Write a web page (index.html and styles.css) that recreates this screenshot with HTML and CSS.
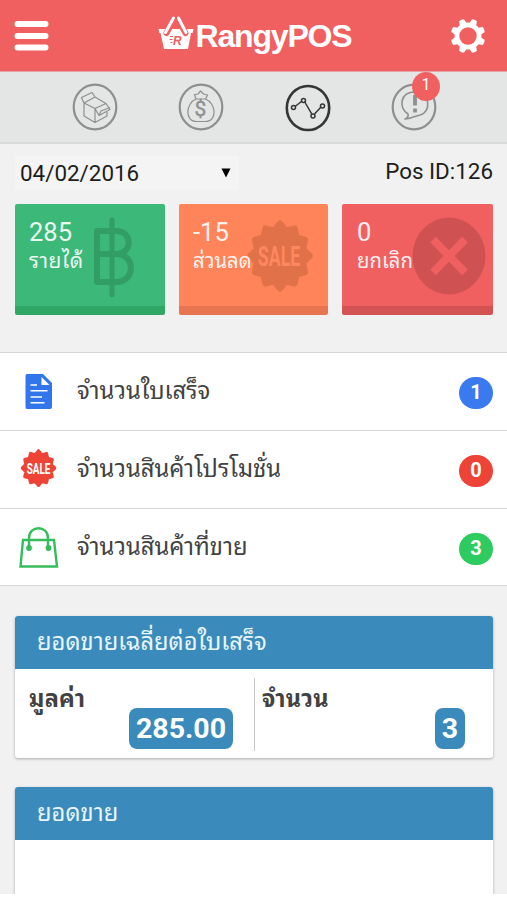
FILE: index.html
```html
<!DOCTYPE html>
<html lang="th">
<head>
<meta charset="utf-8">
<title>RangyPOS</title>
<link rel="stylesheet" href="styles.css">
</head>
<body>
<svg class="defs" width="0" height="0" aria-hidden="true">
  <symbol id="burst" viewBox="0 0 100 100">
    <path fill="currentColor" stroke="currentColor" stroke-width="9" stroke-linejoin="round" d="M95 50 84.800 59.300 88 72 75.500 75.500 72 88 59.300 84.800 50 95 40.700 84.800 28 88 24.500 75.500 12 72 15.200 59.300 5 50 15.200 40.700 12 28 24.500 24.500 28 12 40.700 15.200 50 5 59.300 15.200 72 12 75.500 24.500 88 28 84.800 40.700Z"/>
  </symbol>
</svg>
<div class="app">
  <header class="header">
    <svg class="menu" width="34" height="30" viewBox="0 0 34 30"><path d="M3.500 3H31.500M3.500 15H31.500M3.500 26.500H31.500" stroke="#fff" stroke-width="6" stroke-linecap="round"/></svg>
    <div class="logo">
      <svg width="38" height="36" viewBox="0 0 38 36">
        <path fill="#fff" d="M1.500 14H36.500L35.500 18H34L31 34H7L3.500 18H2.500Z"/>
        <path d="M9.500 18 16 6M28.500 18 22 6" stroke="#f16061" stroke-width="6" stroke-linecap="round"/>
        <path d="M8.500 17.500 16.500 3M29 17.500 21.500 3" stroke="#fff" stroke-width="3" stroke-linecap="round"/>
        <text class="logo-letter" x="16" y="30">R</text>
        <path d="M13 21.500h3M12.500 24.500h3M13.500 27.500h2" stroke="#f16061"/>
      </svg>
      <span class="logo-name">RangyPOS</span>
    </div>
    <svg class="gear" width="36" height="36" viewBox="-18 -18 36 36">
      <g fill="#fff">
        <path id="tooth" transform="rotate(22.5)" d="M-4 -11 -2.600 -17Q0 -18 2.600 -17L4 -11V11L2.600 17Q0 18-2.600 17L-4 11Z"/>
        <use href="#tooth" transform="rotate(45)"/><use href="#tooth" transform="rotate(90)"/><use href="#tooth" transform="rotate(135)"/>
        <circle r="13.500"/>
      </g>
      <circle r="8.700" fill="#f16061"/>
    </svg>
  </header>

  <nav class="tabs">
    <svg width="46" height="48" viewBox="0 0 46 48" fill="none" stroke="#8d9090" stroke-linejoin="round">
      <ellipse cx="23" cy="24" rx="21.300" ry="22.300" stroke-width="2.200"/>
      <path stroke-width="1.200" d="M12 20 23 25.500 34 20.500 23 14ZM12 20 9.500 14.500 20 9.500 23 14M12 20V33L23 39.500 35 33V29M23 25.500V39.500M34 20.500 38 26.500 27 32.500 23 25.500M27 32.500 29 28 38 24.500"/>
    </svg>
    <svg width="46" height="48" viewBox="0 0 46 48" fill="none" stroke="#8d9090" stroke-linejoin="round">
      <ellipse cx="23" cy="24" rx="21.300" ry="22.300" stroke-width="2.200"/>
      <path stroke-width="1.200" d="M18 16 16.500 11.500 20 11 22.500 8 25.500 11 29.500 12 27.500 16ZM18 16C8 20 6 38.500 19 38.500H27C40 38.500 38 20 27.500 16"/>
      <text class="dollar" x="22.500" y="33">$</text>
    </svg>
    <svg width="46" height="48" viewBox="0 0 46 48" fill="none" stroke="#333537">
      <ellipse cx="23" cy="25" rx="21.200" ry="22" stroke-width="2.600"/>
      <path stroke-width="1.500" d="M10 23.500 16.500 18.500M19.500 18.500 26.800 31.200M29.500 31 36 24"/>
      <circle cx="8.500" cy="24.500" r="2" stroke-width="1.500"/><circle cx="18.500" cy="17.500" r="2" stroke-width="1.500"/><circle cx="28" cy="33" r="2" stroke-width="1.500"/><circle cx="37.500" cy="23" r="2" stroke-width="1.500"/>
    </svg>
    <div class="alert">
      <svg width="46" height="48" viewBox="0 0 46 48" fill="none" stroke="#8d9090" stroke-linejoin="round">
        <ellipse cx="23" cy="24" rx="21.300" ry="22.300" stroke-width="2.200"/>
        <path stroke-width="1.600" d="M17 31C7 25 9 9 24 9S41 29 29 32C24 33 19 36 14 36Q18 34 17 31Z"/>
        <path stroke-width="3.800" d="M24 12V22.500M24 25.500V29.500"/>
      </svg>
      <span class="alert-count">1</span>
    </div>
  </nav>

  <div class="filter">
    <div class="date"><span>04/02/2016</span><svg width="10" height="10" viewBox="0 0 10 10"><path d="M.5.5H9.500L5 9.500Z"/></svg></div>
    <span class="pos">Pos ID:126</span>
  </div>

  <section class="cards">
    <div class="card green">
      <svg class="card-art" width="46" height="82" viewBox="0 0 46 82" fill="none" stroke="#329e66" stroke-linejoin="round">
        <path stroke-width="6" d="M5 38H24C44 38 44 66 24 66H5V15H24C41 15 41 38 24 38"/>
        <path stroke-width="5" stroke-linecap="round" d="M20 4V79"/>
      </svg>
      <div class="card-value">285</div><div class="card-label">รายได้</div>
    </div>
    <div class="card orange">
      <svg class="card-art" width="66" height="72" viewBox="0 0 66 72">
        <g color="#e07148" transform="scale(1 1.09)"><use href="#burst" width="66" height="66"/></g>
        <text class="sale" transform="translate(32 45.500) scale(.66 1)" font-size="27" fill="#fd875f">SALE</text>
      </svg>
      <div class="card-value">-15</div><div class="card-label snug">ส่วนลด</div>
    </div>
    <div class="card red">
      <svg class="card-art" width="74" height="78" viewBox="0 0 74 78">
        <ellipse cx="37" cy="39" rx="36.500" ry="38.500" fill="#cf5152"/>
        <path d="M21 22.500 53 55.500M53 22.500 21 55.500" stroke="#f16061" stroke-width="8"/>
      </svg>
      <div class="card-value">0</div><div class="card-label snug">ยกเลิก</div>
    </div>
  </section>

  <section class="list">
    <div class="item">
      <svg class="item-icon" width="40" height="42" viewBox="0 0 40 42">
        <path fill="#3276ee" d="M8 3H24L33 12V36Q33 38 31 38H8Q6.500 38 6.500 36V5Q6.500 3 8 3Z"/>
        <path fill="#fff" d="M22.500 6V14H30.500Z"/>
        <path d="M11.500 14H18M11.500 19.800H28.500M11.500 26H23M11.500 31.800H25.500" stroke="#fff" stroke-width="1.500"/>
      </svg>
      <span class="item-label">จำนวนใบเสร็จ</span><span class="pill blue">1</span>
    </div>
    <div class="item">
      <svg class="item-icon" width="40" height="42" viewBox="0 0 40 42">
        <g color="#ee4437" transform="scale(1 1.06)"><use href="#burst" x="1.500" y="0" width="36" height="36"/></g>
        <text class="sale" transform="translate(19.500 25) scale(.64 1)" font-size="15.500" fill="#fff">SALE</text>
      </svg>
      <span class="item-label">จำนวนสินค้าโปรโมชั่น</span><span class="pill crimson">0</span>
    </div>
    <div class="item">
      <svg class="item-icon" width="40" height="42" viewBox="0 0 40 42" fill="none" stroke="#35bd5b" stroke-width="2.400">
        <path d="M4 14H35L38 40.500H1.500ZM10 22V12C10 -1 29 -1 29 12V22"/>
        <circle cx="10" cy="22" r="1.700" fill="#35bd5b"/><circle cx="29.500" cy="22" r="1.700" fill="#35bd5b"/>
      </svg>
      <span class="item-label">จำนวนสินค้าที่ขาย</span><span class="pill lime">3</span>
    </div>
  </section>

  <section class="panel">
    <h2 class="panel-title">ยอดขายเฉลี่ยต่อใบเสร็จ</h2>
    <div class="stats">
      <div class="stat"><span class="stat-label">มูลค่า</span><span class="stat-value">285.00</span></div>
      <div class="stat"><span class="stat-label">จำนวน</span><span class="stat-value">3</span></div>
    </div>
  </section>
  <section class="panel sales">
    <h2 class="panel-title">ยอดขาย</h2>
  </section>
</div>
</body>
</html>
```
FILE: styles.css
```css
* { box-sizing: border-box; }
html, body { margin: 0; height: 900px; overflow: hidden; background: #fff; }
body { font-family: Roboto, "Noto Sans Thai Looped", Loma, "Noto Sans Thai", "Noto Sans", sans-serif; color: #424242; }
svg { display: block; flex: none; overflow: visible; }
.defs { position: absolute; }
.app { height: 894px; overflow: hidden; background: #f1f1f1; }

.header { height: 72px; background: #f16061; border-bottom: 1px solid #e6a3a3; display: flex; align-items: center; justify-content: space-between; padding: 0 21px 0 14px; }
.logo { display: flex; align-items: center; gap: 1px; margin-left: 10px; }
.logo svg { margin-top: -5px; }
.logo-name { font: bold 32px/40px "Liberation Sans", Arial, sans-serif; letter-spacing: -1.2px; color: #fff; }
.logo-letter { font: italic bold 12px "Liberation Sans", sans-serif; fill: #f16061; }

.tabs { height: 72px; background: #e4e5e5; border-bottom: 2px solid #d9dada; display: flex; justify-content: space-between; padding: 11px 70px 0 72px; }
.dollar { font: 21px Roboto, sans-serif; fill: #8d9090; stroke: #8d9090; stroke-width: .4; text-anchor: middle; }
.alert { position: relative; }
.alert-count { position: absolute; left: 21px; top: -11px; width: 28px; height: 29px; border-radius: 50%; background: #f16061; color: #fff; font-size: 16px; line-height: 25px; text-align: center; }

.filter { height: 60px; display: flex; align-items: flex-start; justify-content: space-between; padding: 12px 14px 0 15px; color: #1d1d1d; font-size: 22.4px; line-height: 32px; }
.date { width: 224px; height: 34px; padding: 0 8px 0 5px; background: #f4f4f4; display: flex; align-items: center; justify-content: space-between; }
.pos { line-height: 31px; }

.cards { height: 148px; padding: 0 14px 0 15px; display: grid; grid-template-columns: 150px 149px 151px; justify-content: space-between; align-items: start; }
.card { position: relative; height: 111px; padding: 13px 0 0 14px; border-radius: 2px; border-bottom: 9px solid; color: #fff; }
.card-value { position: relative; font-size: 25.5px; line-height: 30px; opacity: .9; }
.card-label { position: relative; font-size: 21px; line-height: 29px; letter-spacing: .4px; white-space: nowrap; opacity: .9; }
.card-label.snug { font-size: 20.3px; letter-spacing: 0; }
.card-art { position: absolute; }
.green { background: #3cb878; border-color: #30a865; }
.green .card-art { left: 77px; top: 12px; }
.orange { background: #ff8459; border-color: #e77650; }
.orange .card-art { left: 68px; top: 16px; }
.red { background: #f16061; border-color: #d35354; padding-left: 15px; }
.red .card-art { left: 70px; top: 13px; }
.sale { font-family: Roboto, sans-serif; font-weight: bold; text-anchor: middle; }

.list { height: 234px; background: #fff; border-top: 1px solid #d6d6d6; }
.item { height: 78px; border-bottom: 1px solid #d6d6d6; display: flex; align-items: center; padding: 0 14px 0 19px; }
.item:last-child { height: 77px; }
.item-label { flex: 1; margin-left: 18px; margin-top: -1px; font-size: 23.8px; line-height: 34px; }
.pill { width: 34px; height: 32px; margin-top: 3px; border-radius: 16px; color: #fff; font-size: 20px; line-height: 31px; font-weight: bold; text-align: center; }
.blue { background: #397bef; }
.crimson { background: #ee4437; }
.lime { background: #2dcb60; }

.panel { height: 142px; margin: 30px 14px 0 15px; background: #fff; border-radius: 3px; box-shadow: 0 1px 3px rgba(0,0,0,.3); overflow: hidden; }
.panel-title { margin: 0; height: 53px; padding-left: 22px; background: #3a8bbc; color: #e9f6ff; font-size: 23.7px; line-height: 52px; font-weight: normal; }
.stats { display: grid; grid-template-columns: 240px 1fr; padding-top: 9px; }
.stat { height: 73px; display: flex; flex-direction: column; padding: 5px 21px 0 14px; border-right: 1px solid #c8c8c8; }
.stat + .stat { border: 0; padding: 5px 28px 0 7px; }
.stat-label { font-size: 23.5px; line-height: 32px; height: 25px; font-weight: bold; letter-spacing: .2px; }
.stat-value { align-self: flex-end; height: 41px; padding: 0 7px; border-radius: 8px; background: #3a8bbc; color: #fff; font-size: 28.5px; line-height: 41px; font-weight: bold; }
.sales { height: 140px; margin-top: 29px; }
```
